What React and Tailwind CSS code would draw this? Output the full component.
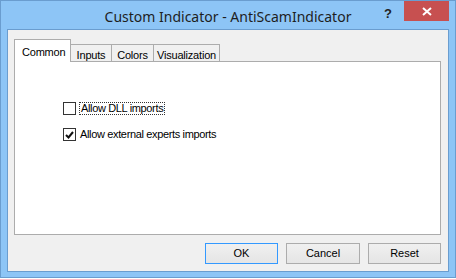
export default function App() {
  const tabs = [
    { label: 'Inputs', w: 'w-[41px]' },
    { label: 'Colors', w: 'w-[42px]' },
    { label: 'Visualization', w: 'w-[66px]' },
  ];

  return (
    <div className="w-[456px] h-[278px] bg-[#8dc5f6] border border-[#6a9dcf] flex flex-col" style={{ fontFamily: '"Liberation Sans", Arial, sans-serif' }}>
      {/* Title bar */}
      <div className="relative h-[28px] shrink-0 flex items-center justify-center">
        <span className="text-[14px] text-[#1e1e1e] pt-[2px]" style={{ fontFamily: '"Noto Sans", "Open Sans", sans-serif' }}>
          Custom Indicator - AntiScamIndicator
        </span>
        <span className="absolute left-[383px] top-[3px] text-[13px] font-bold text-[#222]">?</span>
        <div className="absolute left-[403px] top-0 w-[45px] h-[20px] bg-[#c75050] flex items-center justify-center">
          <svg width="10" height="9" viewBox="0 0 10 9">
            <path d="M1 1 L9 8 M9 1 L1 8" stroke="#fff" strokeWidth="2" />
          </svg>
        </div>
      </div>

      {/* Client area */}
      <div className="mx-[6px] mb-[5px] flex-1 border border-[#6a9dcf] bg-[#f0f0f0] flex flex-col pl-[6px] pr-[7px] pt-[8px] pb-[7px]">
        {/* Tabs */}
        <div className="flex items-end h-[23px] text-[11px] text-black tracking-[-0.2px]">
          <div className="h-[23px] w-[57px] bg-white border border-b-0 border-[#acacac] pl-[7px] pt-[4px] relative z-10 -mb-px pb-px">
            Common
          </div>
          {tabs.map((t) => (
            <div key={t.label} className={`${t.w} h-[17px] bg-[#f0f0f0] border border-b-0 border-l-0 border-[#acacac] text-center pt-[2px]`}>
              {t.label}
            </div>
          ))}
        </div>

        {/* Panel */}
        <div className="h-[174px] bg-white border border-[#acacac] pl-[48px] pt-[40px] flex flex-col gap-[13px] text-[11px] text-black tracking-[-0.35px]">
          <div className="flex items-center gap-[3px]">
            <div className="w-[13px] h-[13px] border border-[#333] bg-white" />
            <span className="border border-dotted border-[#333] px-px leading-[11px] h-[13px]">Allow DLL imports</span>
          </div>
          <div className="flex items-center gap-[4px]">
            <div className="w-[13px] h-[13px] border border-[#333] bg-white flex items-center justify-center">
              <svg width="9" height="8" viewBox="0 0 9 8">
                <path d="M1 4 L3.5 6.5 L8 1" fill="none" stroke="#111" strokeWidth="2" />
              </svg>
            </div>
            <span className="leading-[13px]">Allow external experts imports</span>
          </div>
        </div>

        {/* Buttons */}
        <div className="mt-[8px] flex justify-end gap-[8px] text-[11px] text-black">
          <button className="w-[73px] h-[21px] border border-[#3399ff] bg-gradient-to-b from-[#f0f0f0] to-[#e5e5e5]">OK</button>
          <button className="w-[74px] h-[21px] border border-[#acacac] bg-gradient-to-b from-[#f0f0f0] to-[#e5e5e5]">Cancel</button>
          <button className="w-[73px] h-[21px] border border-[#acacac] bg-gradient-to-b from-[#f0f0f0] to-[#e5e5e5]">Reset</button>
        </div>
      </div>
    </div>
  );
}
